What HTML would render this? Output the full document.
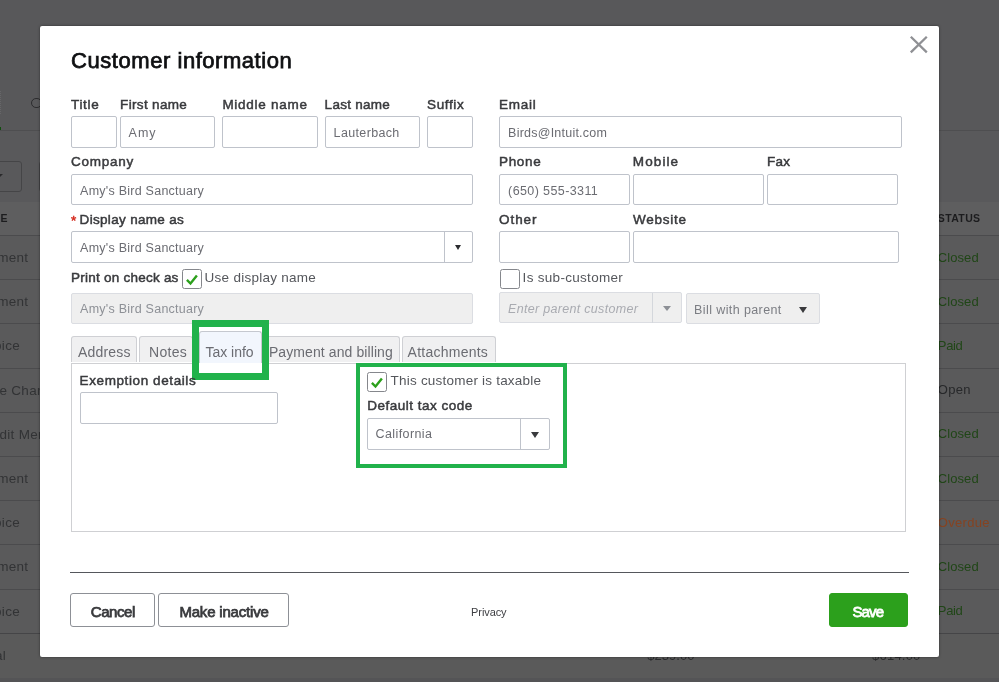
<!DOCTYPE html>
<html lang="en">
<head>
<meta charset="utf-8">
<title>Customer information</title>
<style>
html,body{margin:0;padding:0}
body{width:999px;height:682px;overflow:hidden;position:relative;background:#5a5a5b;font-family:"Liberation Sans",Arial,sans-serif}
.a{position:absolute;box-sizing:border-box}
.t{position:absolute;white-space:pre;line-height:1;display:block}
.in{position:absolute;box-sizing:border-box;border:1px solid #bfc3cb;border-radius:2px;background:#fff;height:31.5px}
.dis{background:#efefef;border-color:#dbdde2}
.ln{position:absolute;left:0;width:999px;height:1px;background:#4b4b4d}
.bt{position:absolute;white-space:pre;line-height:1;font-size:13.5px;letter-spacing:.3px;color:#323335}
.tab{position:absolute;box-sizing:border-box;top:336px;height:26px;border:1px solid #cfd0d4;border-bottom:none;border-radius:3px 3px 0 0;background:#f0f0f1}
.btn{position:absolute;box-sizing:border-box;top:593px;height:34px;border:1px solid #8d9096;border-radius:3px;background:#fff}
.cb{position:absolute;box-sizing:border-box;width:20px;height:20px;border:1.3px solid #85878c;border-radius:2.5px;background:#fff}
</style>
</head>
<body>
<div id="stage" style="position:absolute;left:0;top:0;width:999px;height:682px;overflow:hidden;will-change:transform">
<!-- dimmed page behind the dialog -->
<div class="a" style="left:0;top:0;width:999px;height:130px;background:#58585a"></div>
<div class="ln" style="top:130px;background:#4e4e50"></div>
<div class="a" style="left:0;top:131px;width:999px;height:71px;background:#59595b"></div>
<div class="a" style="left:0;top:201.5px;width:999px;height:34px;background:#5e5e5f"></div>
<div class="a" style="left:0;top:236px;width:999px;height:397px;background:#5a5a5b"></div>
<div class="a" style="left:0;top:633.5px;width:999px;height:49px;background:#5a5a5a"></div>
<div class="a" style="left:0;top:678px;width:999px;height:4px;background:#545456"></div>
<div class="ln" style="top:235.0px;background:#4b4b4d"></div>
<div class="ln" style="top:279.2px;background:#4b4b4d"></div>
<div class="ln" style="top:323.4px;background:#4b4b4d"></div>
<div class="ln" style="top:367.6px;background:#4b4b4d"></div>
<div class="ln" style="top:411.8px;background:#4b4b4d"></div>
<div class="ln" style="top:456.0px;background:#4b4b4d"></div>
<div class="ln" style="top:500.2px;background:#4b4b4d"></div>
<div class="ln" style="top:544.4px;background:#4b4b4d"></div>
<div class="ln" style="top:588.6px;background:#4b4b4d"></div>
<div class="ln" style="top:632.8px;background:#454547;height:1.6px"></div>
<span class="bt" style="right:970.6px;top:250.9px">Payment</span>
<span class="bt" style="right:970.6px;top:295.1px">Payment</span>
<span class="bt" style="right:979.0px;top:339.2px">Invoice</span>
<span class="bt" style="left:-42.9px;top:383.5px">Finance Charge</span>
<span class="bt" style="left:-23.2px;top:427.7px">Credit Memo</span>
<span class="bt" style="right:970.6px;top:471.9px">Payment</span>
<span class="bt" style="right:979.0px;top:516.1px">Invoice</span>
<span class="bt" style="right:970.6px;top:560.2px">Payment</span>
<span class="bt" style="right:979.0px;top:604.5px">Invoice</span>
<span class="bt" style="right:993.0px;top:648.7px">Total</span>
<!-- left fragments -->
<div class="a" style="left:0;top:91px;width:1px;height:23px;border-left:1px dotted #666668"></div>
<div class="a" style="left:0;top:127px;width:1px;height:3.3px;background:#0f4f0c"></div>
<div class="a" style="left:31.3px;top:97.8px;width:10.6px;height:10.6px;border:1.1px solid #2c2c2e;border-radius:50%"></div>
<div class="a" style="left:-20px;top:161px;width:42px;height:31px;border:1px solid #454547;border-radius:3px"></div>
<div class="a" style="left:-5px;top:174px;width:0;height:0;border-left:4px solid transparent;border-right:4px solid transparent;border-top:4px solid #2a2a2c"></div>
<div class="a" style="left:39px;top:161px;width:40px;height:31px;border:1px solid #454547;border-radius:3px"></div>
<span class="t" style="left:937.8px;top:212.70px;font-size:10.5px;font-weight:700;color:#1c1c1e;letter-spacing:0.372px;">STATUS</span>
<span class="t" style="left:937.8px;top:250.50px;font-size:13px;font-weight:400;color:#204617;letter-spacing:0.078px;">Closed</span>
<span class="t" style="left:937.8px;top:294.70px;font-size:13px;font-weight:400;color:#204617;letter-spacing:0.078px;">Closed</span>
<span class="t" style="left:937.8px;top:338.90px;font-size:13px;font-weight:400;color:#204617;letter-spacing:-0.323px;">Paid</span>
<span class="t" style="left:937.8px;top:383.10px;font-size:13px;font-weight:400;color:#27282a;letter-spacing:0.311px;">Open</span>
<span class="t" style="left:937.8px;top:427.30px;font-size:13px;font-weight:400;color:#204617;letter-spacing:0.078px;">Closed</span>
<span class="t" style="left:937.8px;top:471.50px;font-size:13px;font-weight:400;color:#204617;letter-spacing:0.078px;">Closed</span>
<span class="t" style="left:937.8px;top:515.70px;font-size:13px;font-weight:400;color:#864321;letter-spacing:0.312px;">Overdue</span>
<span class="t" style="left:937.8px;top:559.90px;font-size:13px;font-weight:400;color:#204617;letter-spacing:0.078px;">Closed</span>
<span class="t" style="left:937.8px;top:604.10px;font-size:13px;font-weight:400;color:#204617;letter-spacing:-0.323px;">Paid</span>
<span class="t" style="left:647.2px;top:649.00px;font-size:13px;font-weight:400;color:#2b2c2e;letter-spacing:0.046px;">$239.00</span>
<span class="t" style="left:872.1px;top:649.00px;font-size:13px;font-weight:400;color:#2b2c2e;letter-spacing:0.200px;">$614.00</span>
<span class="t" style="left:0.6px;top:212.70px;font-size:10.5px;font-weight:700;color:#1c1c1e;letter-spacing:0.384px;">E</span>

<!-- dialog -->
<div class="a" style="left:40px;top:26px;width:899px;height:631px;background:#fff;border-radius:2px;box-shadow:0 0 2.5px rgba(0,0,0,.5)"></div>
<svg class="a" style="left:909px;top:35px" width="20" height="20" viewBox="0 0 20 20"><path d="M1.8 1.8 L17.8 17.4 M17.8 1.8 L1.8 17.4" stroke="#8f9094" stroke-width="2.3" fill="none"/></svg>

<!-- row 1 -->
<div class="in" style="left:71px;top:116px;width:46px"></div>
<div class="in" style="left:120px;top:116px;width:95px"></div>
<div class="in" style="left:222px;top:116px;width:95.7px"></div>
<div class="in" style="left:325px;top:116px;width:95px"></div>
<div class="in" style="left:427.4px;top:116px;width:46px"></div>
<div class="in" style="left:499px;top:116px;width:403px"></div>
<!-- row 2 -->
<div class="in" style="left:71px;top:173.5px;width:402.4px"></div>
<div class="in" style="left:499px;top:173.5px;width:131px"></div>
<div class="in" style="left:633px;top:173.5px;width:131px"></div>
<div class="in" style="left:767px;top:173.5px;width:131px"></div>
<!-- row 3 -->
<div class="in" style="left:71px;top:231px;width:402.4px;height:31.5px"></div>
<div class="a" style="left:444px;top:232px;width:1px;height:30px;background:#bfc3cb"></div>
<div class="a" style="left:454.8px;top:245.3px;width:0;height:0;border-left:3.6px solid transparent;border-right:3.6px solid transparent;border-top:5px solid #2b2c2f"></div>
<div class="in" style="left:499px;top:231px;width:131px;height:31.5px"></div>
<div class="in" style="left:633px;top:231px;width:266px;height:31.5px"></div>
<!-- row 4 -->
<div class="cb" style="left:181.6px;top:268.7px"></div>
<svg class="a" style="left:181.6px;top:268.7px" width="20" height="20" viewBox="0 0 20 20"><path d="M4.9 10.9 L8.5 14.5 L14.9 6.5" stroke="#2ca01c" stroke-width="2.4" fill="none"/></svg>
<div class="cb" style="left:499.5px;top:268.7px"></div>
<div class="in dis" style="left:71px;top:292.5px;width:402.4px;height:31.3px"></div>
<div class="in dis" style="left:499px;top:292px;width:183px;height:31.3px"></div>
<div class="a" style="left:652px;top:293px;width:1px;height:30px;background:#d4d7dc"></div>
<div class="a" style="left:663px;top:306px;width:0;height:0;border-left:4px solid transparent;border-right:4px solid transparent;border-top:5px solid #8d9096"></div>
<div class="in dis" style="left:686px;top:293px;width:134px;height:31.4px"></div>
<div class="a" style="left:799px;top:306.5px;width:0;height:0;border-left:4.5px solid transparent;border-right:4.5px solid transparent;border-top:6px solid #393a3d"></div>

<!-- tabs -->
<div class="a" style="left:71px;top:362.5px;width:835px;height:169px;border:1px solid #cfd0d3;background:#fff"></div>
<div class="tab" style="left:71px;width:66px"></div>
<div class="tab" style="left:139px;width:54px"></div>
<div class="tab" style="left:263px;width:137px"></div>
<div class="tab" style="left:402px;width:94px"></div>
<div class="a" style="left:192px;top:320.3px;width:77px;height:60px;background:#fff"></div>
<div class="tab" style="left:199px;top:331px;height:33px;width:63px;background:#f2f6fd;border-color:#c5c8cf"></div>
<div class="a" style="left:199px;top:363px;width:63px;height:10px;background:#fff"></div>
<div class="a" style="left:192px;top:320.3px;width:77px;height:60px;border:7px solid #21b24b"></div>

<!-- panel -->
<div class="in" style="left:80px;top:392px;width:198px"></div>
<div class="a" style="left:356.3px;top:362.6px;width:210.8px;height:105.3px;border:4.5px solid #21b24b;background:#fff"></div>
<div class="cb" style="left:367px;top:372px"></div>
<svg class="a" style="left:366.8px;top:372.2px" width="20" height="20" viewBox="0 0 20 20"><path d="M4.9 10.9 L8.5 14.5 L14.9 6.5" stroke="#2ca01c" stroke-width="2.4" fill="none"/></svg>
<div class="in" style="left:367px;top:418px;width:183px"></div>
<div class="a" style="left:520px;top:419px;width:1px;height:30px;background:#bfc3cb"></div>
<div class="a" style="left:530.7px;top:431.7px;width:0;height:0;border-left:4.5px solid transparent;border-right:4.5px solid transparent;border-top:6px solid #393a3d"></div>

<!-- footer -->
<div class="a" style="left:70px;top:572px;width:839px;height:1px;background:#55575c"></div>
<div class="btn" style="left:70px;width:85px"></div>
<div class="btn" style="left:158px;width:131px"></div>
<div class="btn" style="left:829px;width:79px;background:#2ca01c;border-color:#2ca01c"></div>

<span class="t" style="left:71.1px;top:49.80px;font-size:22px;font-weight:400;-webkit-text-stroke:0.75px #0f1012;color:#0f1012;letter-spacing:0.543px;">Customer information</span>
<span class="t" style="left:71.1px;top:98.00px;font-size:13.5px;font-weight:400;-webkit-text-stroke:0.48px #393a3d;color:#393a3d;letter-spacing:0.641px;">Title</span>
<span class="t" style="left:120.1px;top:98.00px;font-size:13.5px;font-weight:400;-webkit-text-stroke:0.48px #393a3d;color:#393a3d;letter-spacing:0.330px;">First name</span>
<span class="t" style="left:222.4px;top:98.00px;font-size:13.5px;font-weight:400;-webkit-text-stroke:0.48px #393a3d;color:#393a3d;letter-spacing:0.724px;">Middle name</span>
<span class="t" style="left:324.6px;top:98.00px;font-size:13.5px;font-weight:400;-webkit-text-stroke:0.48px #393a3d;color:#393a3d;letter-spacing:0.277px;">Last name</span>
<span class="t" style="left:427.1px;top:98.00px;font-size:13.5px;font-weight:400;-webkit-text-stroke:0.48px #393a3d;color:#393a3d;letter-spacing:0.612px;">Suffix</span>
<span class="t" style="left:499.1px;top:98.00px;font-size:13.5px;font-weight:400;-webkit-text-stroke:0.48px #393a3d;color:#393a3d;letter-spacing:0.697px;">Email</span>
<span class="t" style="left:128.6px;top:127.00px;font-size:12.5px;font-weight:400;color:#6b6c72;letter-spacing:0.960px;">Amy</span>
<span class="t" style="left:333.6px;top:127.00px;font-size:12.5px;font-weight:400;color:#6b6c72;letter-spacing:0.351px;">Lauterbach</span>
<span class="t" style="left:508.1px;top:127.00px;font-size:12.5px;font-weight:400;color:#6b6c72;letter-spacing:0.228px;">Birds@Intuit.com</span>
<span class="t" style="left:71.1px;top:155.00px;font-size:13.5px;font-weight:400;-webkit-text-stroke:0.48px #393a3d;color:#393a3d;letter-spacing:0.711px;">Company</span>
<span class="t" style="left:499.1px;top:155.00px;font-size:13.5px;font-weight:400;-webkit-text-stroke:0.48px #393a3d;color:#393a3d;letter-spacing:0.634px;">Phone</span>
<span class="t" style="left:632.8px;top:155.00px;font-size:13.5px;font-weight:400;-webkit-text-stroke:0.48px #393a3d;color:#393a3d;letter-spacing:1.112px;">Mobile</span>
<span class="t" style="left:767.1px;top:155.00px;font-size:13.5px;font-weight:400;-webkit-text-stroke:0.48px #393a3d;color:#393a3d;letter-spacing:0.154px;">Fax</span>
<span class="t" style="left:80.1px;top:184.50px;font-size:12.5px;font-weight:400;color:#6b6c72;letter-spacing:0.246px;">Amy's Bird Sanctuary</span>
<span class="t" style="left:508.1px;top:184.50px;font-size:12.5px;font-weight:400;color:#6b6c72;letter-spacing:0.395px;">(650) 555-3311</span>
<span class="t" style="left:71.1px;top:214.00px;font-size:13.5px;font-weight:400;-webkit-text-stroke:0.48px #d52b1e;color:#d52b1e;letter-spacing:1.134px;">*</span>
<span class="t" style="left:79.6px;top:213.00px;font-size:13.5px;font-weight:400;-webkit-text-stroke:0.48px #393a3d;color:#393a3d;letter-spacing:0.317px;">Display name as</span>
<span class="t" style="left:499.1px;top:213.00px;font-size:13.5px;font-weight:400;-webkit-text-stroke:0.48px #393a3d;color:#393a3d;letter-spacing:0.919px;">Other</span>
<span class="t" style="left:633.1px;top:213.00px;font-size:13.5px;font-weight:400;-webkit-text-stroke:0.48px #393a3d;color:#393a3d;letter-spacing:0.749px;">Website</span>
<span class="t" style="left:80.1px;top:242.00px;font-size:12.5px;font-weight:400;color:#6b6c72;letter-spacing:0.246px;">Amy's Bird Sanctuary</span>
<span class="t" style="left:71.1px;top:270.50px;font-size:13.5px;font-weight:400;-webkit-text-stroke:0.48px #393a3d;color:#393a3d;letter-spacing:0.233px;">Print on check as</span>
<span class="t" style="left:204.6px;top:271.00px;font-size:13.5px;font-weight:400;color:#55575c;letter-spacing:0.264px;">Use display name</span>
<span class="t" style="left:522.6px;top:271.00px;font-size:13.5px;font-weight:400;color:#55575c;letter-spacing:0.301px;">Is sub-customer</span>
<span class="t" style="left:80.1px;top:303.00px;font-size:12.5px;font-weight:400;color:#8d9096;letter-spacing:0.246px;">Amy's Bird Sanctuary</span>
<span class="t" style="left:508.1px;top:303.00px;font-size:12.5px;font-weight:400;color:#a9abb1;letter-spacing:0.304px;font-style:italic;">Enter parent customer</span>
<span class="t" style="left:694.1px;top:304.00px;font-size:12.5px;font-weight:400;color:#7b7d83;letter-spacing:0.394px;">Bill with parent</span>
<span class="t" style="left:78.1px;top:344.60px;font-size:14px;font-weight:400;color:#6b6c72;letter-spacing:0.160px;">Address</span>
<span class="t" style="left:149.1px;top:344.60px;font-size:14px;font-weight:400;color:#6b6c72;letter-spacing:0.294px;">Notes</span>
<span class="t" style="left:205.6px;top:344.60px;font-size:14px;font-weight:400;color:#6b6c72;letter-spacing:-0.047px;">Tax info</span>
<span class="t" style="left:268.9px;top:344.60px;font-size:14px;font-weight:400;color:#6b6c72;letter-spacing:0.093px;">Payment and billing</span>
<span class="t" style="left:407.6px;top:344.60px;font-size:14px;font-weight:400;color:#6b6c72;letter-spacing:0.245px;">Attachments</span>
<span class="t" style="left:79.6px;top:374.00px;font-size:13.5px;font-weight:400;-webkit-text-stroke:0.48px #393a3d;color:#393a3d;letter-spacing:0.596px;">Exemption details</span>
<span class="t" style="left:390.6px;top:373.50px;font-size:13.5px;font-weight:400;color:#55575c;letter-spacing:0.210px;">This customer is taxable</span>
<span class="t" style="left:367.3px;top:399.00px;font-size:13.5px;font-weight:400;-webkit-text-stroke:0.48px #393a3d;color:#393a3d;letter-spacing:0.493px;">Default tax code</span>
<span class="t" style="left:375.6px;top:428.00px;font-size:12.5px;font-weight:400;color:#6b6c72;letter-spacing:0.399px;">California</span>
<span class="t" style="left:90.8px;top:604.00px;font-size:15px;font-weight:400;-webkit-text-stroke:0.75px #393a3d;color:#393a3d;letter-spacing:-0.437px;">Cancel</span>
<span class="t" style="left:179.4px;top:604.00px;font-size:15px;font-weight:400;-webkit-text-stroke:0.75px #393a3d;color:#393a3d;letter-spacing:-0.193px;">Make inactive</span>
<span class="t" style="left:471.1px;top:606.50px;font-size:11px;font-weight:400;color:#3d3e42;letter-spacing:-0.102px;">Privacy</span>
<span class="t" style="left:852.4px;top:604.00px;font-size:15px;font-weight:400;-webkit-text-stroke:0.80px #ffffff;color:#ffffff;letter-spacing:-0.829px;">Save</span>
</div>
</body>
</html>
